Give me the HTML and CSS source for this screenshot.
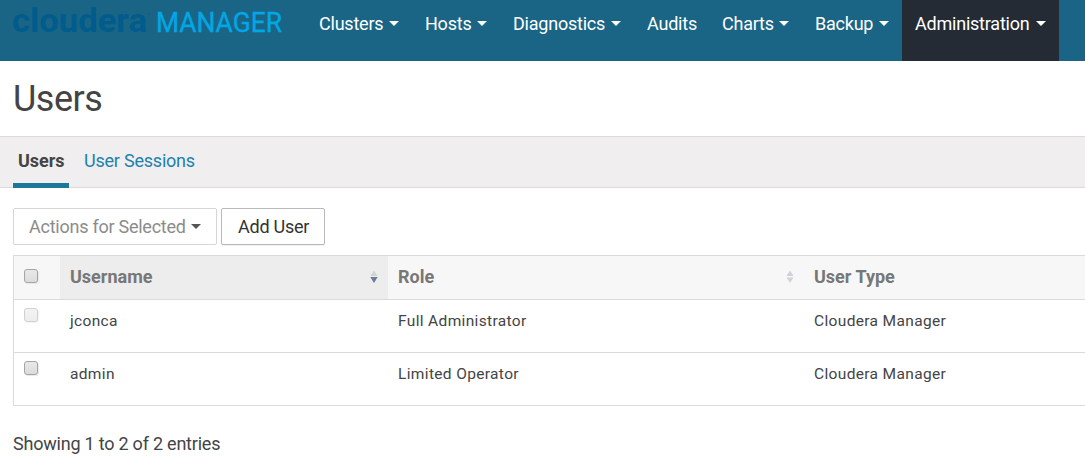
FILE: index.html
```html
<!DOCTYPE html>
<html lang="en">
<head>
<meta charset="utf-8">
<title>Users - Cloudera Manager</title>
<link rel="stylesheet" href="styles.css">
</head>
<body>
<header class="navbar">
  <svg class="logo" width="306" height="61" viewBox="0 0 306 61" role="img" aria-label="Cloudera Manager">
    <text class="logo-brand" x="12" y="31.5" textLength="135" lengthAdjust="spacingAndGlyphs">cloudera</text>
    <circle class="logo-mark" cx="149" cy="14" r="1.5"/>
    <text class="logo-product" x="156" y="32" textLength="126" lengthAdjust="spacingAndGlyphs">MANAGER</text>
  </svg>
  <nav class="menu">
    <a class="menu-item clusters">Clusters<i class="caret"></i></a>
    <a class="menu-item hosts">Hosts<i class="caret"></i></a>
    <a class="menu-item diagnostics">Diagnostics<i class="caret"></i></a>
    <a class="menu-item audits">Audits</a>
    <a class="menu-item charts">Charts<i class="caret"></i></a>
    <a class="menu-item backup">Backup<i class="caret"></i></a>
    <a class="menu-item administration active">Administration<i class="caret"></i></a>
  </nav>
</header>
<h1 class="title">Users</h1>
<div class="tabs">
  <a class="tab tab-active">Users</a>
  <a class="tab tab-link">User Sessions</a>
</div>
<main class="content">
  <div class="toolbar">
    <button class="btn btn-disabled"><span class="actions-label">Actions for Selected</span><i class="caret"></i></button>
    <button class="btn btn-add">Add User</button>
  </div>
  <div class="table">
    <div class="row head">
      <div class="cell check"><span class="box"></span></div>
      <div class="cell sorted">Username
        <svg class="sort" width="8" height="14" viewBox="0 0 8 14"><path class="sort-off" d="M4 .5 7.5 6h-7z"/><path class="sort-on" d="M.3 7h7.4L4 13z"/></svg>
      </div>
      <div class="cell">Role
        <svg class="sort" width="8" height="14" viewBox="0 0 8 14"><path class="sort-off" d="M4 .5 7.5 6h-7zM.5 7.5h7L4 13z"/></svg>
      </div>
      <div class="cell">User Type</div>
    </div>
    <div class="row">
      <div class="cell check"><span class="box box-disabled"></span></div>
      <div class="cell">jconca</div>
      <div class="cell">Full Administrator</div>
      <div class="cell">Cloudera Manager</div>
    </div>
    <div class="row">
      <div class="cell check"><span class="box"></span></div>
      <div class="cell">admin</div>
      <div class="cell">Limited Operator</div>
      <div class="cell">Cloudera Manager</div>
    </div>
  </div>
  <p class="summary">Showing 1 to 2 of 2 entries</p>
</main>
</body>
</html>
```
FILE: styles.css
```css
* { box-sizing: border-box; }
body { margin: 0; overflow: hidden; background: #fff; color: #444; font: 18px/24px Roboto, sans-serif; letter-spacing: -.22px; }
.navbar { display: flex; height: 61px; background: #1a6585; }
.logo { flex: none; letter-spacing: 0; }
.logo-brand { font: 700 33px Roboto, sans-serif; fill: #005c8c; }
.logo-mark { fill: #005c8c; opacity: .5; }
.logo-product { font: 400 27px Roboto, sans-serif; fill: #00a7e5; stroke: #00a7e5; stroke-width: .35px; }
.menu { display: flex; }
.menu-item { display: flex; justify-content: space-between; padding: 12px 13px; color: #fff; white-space: nowrap; }
.clusters { width: 106px; }
.hosts { width: 88px; }
.diagnostics { width: 134px; }
.audits { width: 75px; }
.charts { width: 93px; }
.backup { width: 100px; }
.administration { width: 157px; }
.active { background: #242b35; }
.caret { flex: none; width: 0; height: 0; margin-top: 9px; border: 5px solid transparent; border-top-color: currentColor; border-bottom: 0; }
.title { margin: 0; height: 75px; padding: 18px 13px; font-size: 36px; line-height: 40px; font-weight: 400; letter-spacing: -.5px; }
.tabs { display: flex; height: 52px; padding-left: 13px; background: #f0eeef; border: solid #dbdbdb; border-width: 1px 0; }
.tab { height: 51px; padding: 12px 5px; white-space: nowrap; }
.tab-active { width: 56px; border-bottom: 5px solid #1c789b; font-weight: 700; letter-spacing: -.05px; }
.tab-link { margin-left: 10px; color: #1c82ad; }
.content { padding: 20px 0 0 13px; }
.toolbar { display: flex; gap: 4px; }
.btn { display: flex; align-items: center; height: 37px; padding: 0 16px; background: #fff; border: 1px solid #b9b9b9; border-radius: 2px; color: #333; font: 18px/24px Roboto, sans-serif; letter-spacing: -.25px; white-space: nowrap; }
.btn-disabled { width: 204px; padding: 0 15px; justify-content: space-between; border-color: #d6d6d6; color: #555; }
.actions-label { color: #8b8b8b; }
.btn .caret { margin-top: 0; }
.btn-add { width: 104px; box-shadow: 0 1px 1px rgba(0, 0, 0, .06); }
.table { width: 1100px; margin-top: 10px; border: 1px solid #dbdbdb; border-bottom: 0; }
.row { display: grid; grid-template-columns: 46px 328px 416px 1fr; height: 53px; border-bottom: 1px solid #dbdbdb; font-size: 15.5px; letter-spacing: .35px; }
.cell { padding: 9px 10px; }
.head { height: 44px; background: #f7f7f7; color: #777; font-size: 18px; font-weight: 700; letter-spacing: 0; }
.head .cell { display: flex; justify-content: space-between; }
.sorted { background: #ededed; }
.sort { flex: none; margin-top: 5px; }
.sort-off { fill: #d0d2d3; }
.sort-on { fill: #687f95; }
.check { padding-top: 8px; }
.head .check { padding-top: 13px; }
.box { display: block; width: 14px; height: 14px; border: 1px solid #a4a4a4; border-radius: 3px; background: linear-gradient(#e8e8e8, #dcdcdc); box-shadow: 1px 1px 1px #e8e8e8; }
.box-disabled { opacity: .5; }
.summary { margin: 26px 0 0; }
```
